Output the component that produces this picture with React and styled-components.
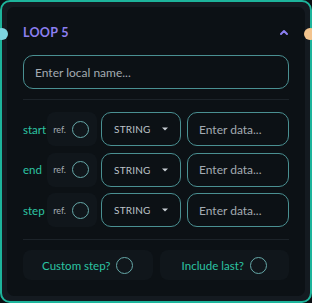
import React from "react";
import styled, { createGlobalStyle } from "styled-components";

const Global = createGlobalStyle`
  html, body { margin: 0; padding: 0; background: #0b0f13; }
  body { font-family: "Lato", "Open Sans", sans-serif; }
  * { box-sizing: border-box; }
`;

const Node = styled.div`
  position: relative;
  width: 312px;
  height: 303px;
  border: 2px solid #1db49b;
  border-radius: 10px;
  background: #141a20;
  padding: 5px;
`;

const Handle = styled.div`
  position: absolute;
  top: 26px;
  ${(p) => (p.$side === "left" ? "left: -6px;" : "right: -6px;")}
  width: 12px;
  height: 12px;
  border-radius: 50%;
  background: ${(p) => p.$color};
`;

const Inner = styled.div`
  height: 100%;
  border-radius: 7px;
  background: #0c1115;
  padding: 12px 16px 0 16px;
  display: flex;
  flex-direction: column;
`;

const Header = styled.div`
  height: 26px;
  margin-bottom: 10px;
  display: flex;
  align-items: center;
  justify-content: space-between;
`;

const Title = styled.div`
  color: #8c7ff0;
  font-weight: 700;
  font-size: 12.5px;
  letter-spacing: 0.3px;
`;

const TextInput = styled.div`
  height: 34px;
  border: 1.5px solid #4a9092;
  border-radius: 10px;
  display: flex;
  align-items: center;
  padding-left: 11px;
  color: #a3abb2;
  font-size: 12px;
  flex: ${(p) => p.$flex || "none"};
  min-width: 0;
  white-space: nowrap;
`;

const Divider = styled.div`
  height: 1px;
  background: #1c2329;
  margin: ${(p) => p.$m};
`;

const Rows = styled.div`
  display: flex;
  flex-direction: column;
  gap: 6.5px;
`;

const Row = styled.div`
  display: grid;
  grid-template-columns: 24px 54px 86px 1fr;
  align-items: center;
  height: 34px;
`;

const Label = styled.div`
  color: #2cc4a3;
  font-size: 11.5px;
`;

const RefBox = styled.div`
  height: 34px;
  border-radius: 8px;
  background: #10161b;
  display: flex;
  align-items: center;
  justify-content: flex-end;
  gap: 6px;
  padding-right: 8px;
  color: #a3abb2;
  font-size: 9px;
  margin-right: 4px;
`;

const Circle = styled.div`
  width: 17px;
  height: 17px;
  border-radius: 50%;
  border: 1.5px solid #66a8a8;
  flex: none;
`;

const Select = styled.div`
  height: 34px;
  border: 1.5px solid #4a9092;
  border-radius: 10px;
  display: flex;
  align-items: center;
  justify-content: space-between;
  padding: 0 12px 0 12px;
  color: #bcc3c9;
  font-size: 10px;
  letter-spacing: 0.2px;
  margin-right: 6px;
`;

const Buttons = styled.div`
  display: flex;
  gap: 7px;
`;

const OptButton = styled.div`
  flex: 1;
  height: 30px;
  border-radius: 8px;
  background: #10161b;
  display: flex;
  align-items: center;
  justify-content: center;
  gap: 6px;
  color: #2cc4a3;
  font-size: 11.5px;
`;

const Chevron = () => (
  <svg width="10" height="8" viewBox="0 0 10 8">
    <path d="M2 6 L5 3 L8 6" fill="none" stroke="#8c7ff0" strokeWidth="2" strokeLinecap="round" strokeLinejoin="round" />
  </svg>
);

const Caret = () => (
  <svg width="6" height="4" viewBox="0 0 6 4">
    <path d="M0 0.5 L6 0.5 L3 3.5 Z" fill="#c8ced3" />
  </svg>
);

const rows = ["start", "end", "step"];

export default function App() {
  return (
    <>
      <Global />
      <Node>
        <Handle $side="left" $color="#7fd6e2" />
        <Handle $side="right" $color="#f2c48e" />
        <Inner>
          <Header>
            <Title>LOOP 5</Title>
            <Chevron />
          </Header>
          <TextInput>Enter local name...</TextInput>
          <Divider $m="10px 0 12px" />
          <Rows>
            {rows.map((r) => (
              <Row key={r}>
                <Label>{r}</Label>
                <RefBox>
                  ref.
                  <Circle />
                </RefBox>
                <Select>
                  STRING
                  <Caret />
                </Select>
                <TextInput $flex="1">Enter data...</TextInput>
              </Row>
            ))}
          </Rows>
          <Divider $m="12px 0 10px" />
          <Buttons>
            <OptButton>
              Custom step?
              <Circle />
            </OptButton>
            <OptButton>
              Include last?
              <Circle />
            </OptButton>
          </Buttons>
        </Inner>
      </Node>
    </>
  );
}
